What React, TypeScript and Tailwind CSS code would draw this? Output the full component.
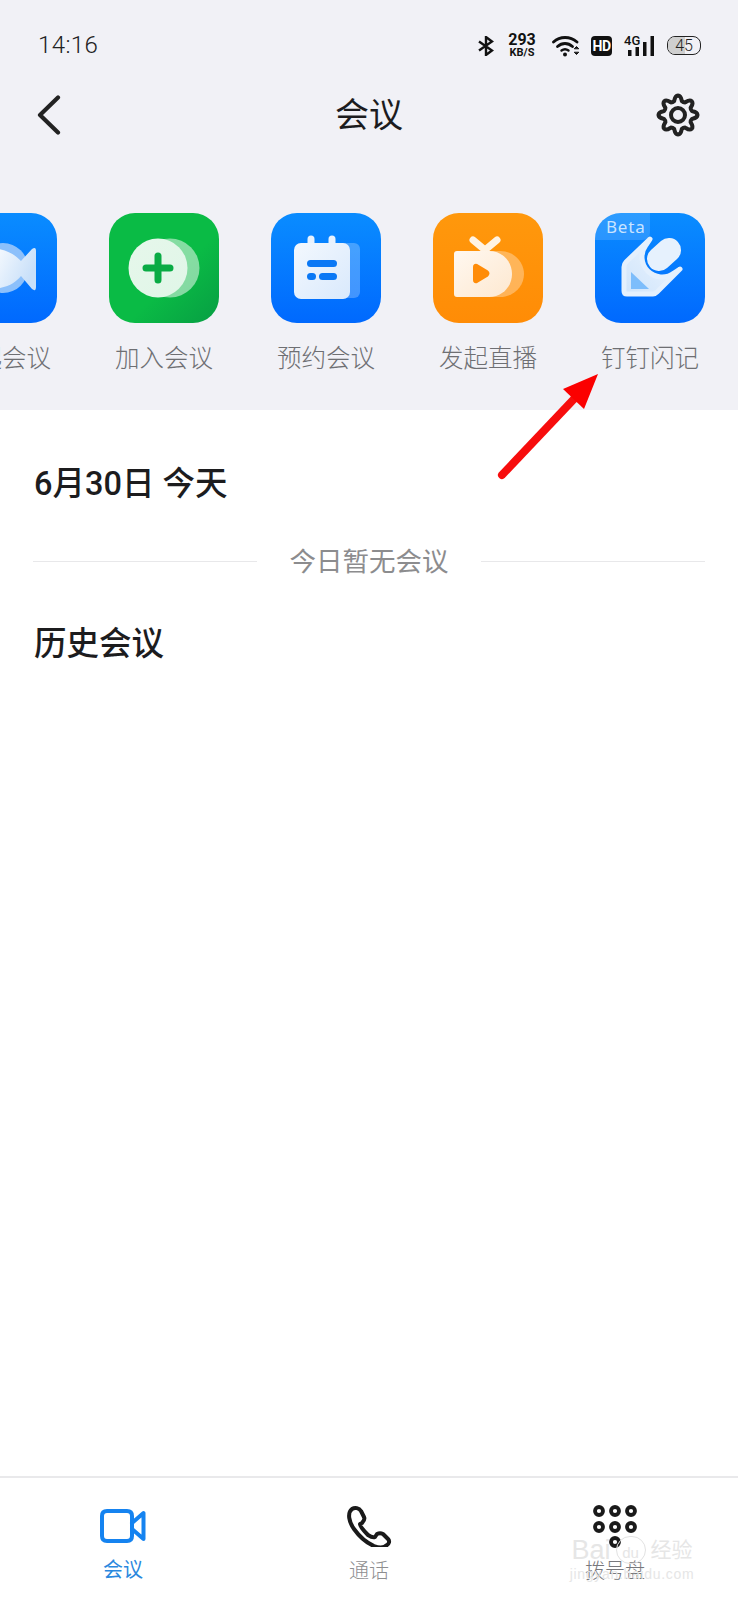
const gearPath = (() => {
  // 8 rounded lobes round the centre
  const pts: string[] = [];
  const n = 8;
  for (let i = 0; i < n; i++) {
    const a = (i / n) * Math.PI * 2 - Math.PI / 2;
    const step = (Math.PI * 2) / n;
    const p = (r: number, t: number) =>
      `${(21 + r * Math.cos(t)).toFixed(2)} ${(21 + r * Math.sin(t)).toFixed(2)}`;
    if (i === 0) pts.push(`M${p(14.5, a - step * 0.34)}`);
    pts.push(`C${p(16.5, a - step * 0.26)} ${p(19.5, a - step * 0.2)} ${p(19.5, a)}`);
    pts.push(`C${p(19.5, a + step * 0.2)} ${p(16.5, a + step * 0.26)} ${p(14.5, a + step * 0.34)}`);
    pts.push(`Q${p(13.6, a + step * 0.5)} ${p(14.5, a + step * 0.66)}`);
  }
  return pts.join(" ") + "Z";
})();

const StatusBar = () => (
  <div className="flex h-[62px] items-end justify-between pl-[38px] pr-[37px]">
    <span className="text-[24px] leading-[34px] font-light tracking-[0.4px] text-[#222]">14:16</span>
    <div className="flex items-center pb-[4px]">
      <svg width="16" height="20" viewBox="0 0 16 20" fill="none" stroke="#111" strokeWidth="2.4">
        <path d="M1 5.5 14 14.5 8 19V1L14 5.5 1 14.5" />
      </svg>
      <div className="ml-[14px] flex w-[28px] flex-col items-center font-['Roboto',sans-serif] text-[#111]">
        <span className="text-[16px] leading-[14px] font-bold">293</span>
        <span className="mt-[1px] text-[11px] leading-[10px] font-bold">KB/S</span>
      </div>
      <svg className="ml-[16px]" width="28" height="22" viewBox="0 0 28 22" fill="none" stroke="#111" strokeWidth="2.8" strokeLinecap="round">
        <path d="M1.5 7C8 1 18 1 25 7" />
        <path d="M5.5 11.5C10 7.5 16 7.5 20.5 11.5" />
        <path d="M9.5 15.5C11.500 14 14.500 14 16.500 15.500" strokeWidth="2.4" />
        <circle cx="13" cy="19.500" r="2" fill="#111" stroke="none" />
        <path d="M22.500 13.500 24.500 11.500 26.500 13.500Z M22.500 17.500 24.500 19.500 26.500 17.500Z" fill="#111" stroke="#111" strokeWidth="1" />
      </svg>
      <div className="ml-[11px] flex h-[20px] w-[21px] items-center justify-center rounded-[4px] bg-[#111] font-['Roboto',sans-serif] text-[14px] leading-none font-bold tracking-[-0.5px] text-white">
        HD
      </div>
      <div className="relative ml-[12px] h-[20px] w-[31px]">
        <span className="absolute top-[-2px] left-0 font-['Roboto',sans-serif] text-[13px] leading-[13px] font-medium text-[#111]">4G</span>
        <svg className="absolute top-0 left-0" width="31" height="20" viewBox="0 0 31 20" fill="#111">
          <rect x="4" y="14" width="3.500" height="6" />
          <rect x="11.500" y="11" width="3.500" height="9" />
          <rect x="19" y="6" width="3.500" height="14" />
          <rect x="26.500" y="0" width="3.500" height="20" />
        </svg>
      </div>
      <div className="relative ml-[12px] flex h-[19px] w-[34px] items-center justify-center overflow-hidden rounded-[8px] border-[1.5px] border-[#222]">
        <div className="absolute inset-y-0 left-0 w-[54%] bg-[#cfcfcf]" />
        <span className="relative font-['Roboto',sans-serif] text-[16px] leading-none font-light text-[#222]">45</span>
      </div>
    </div>
  </div>
);

const VideoApp = () => (
  <svg width="110" height="110" viewBox="0 0 110 110">
    <defs>
      <linearGradient id="v" x1="0" y1="0" x2="0" y2="1">
        <stop offset="0" stopColor="#0a8cff" />
        <stop offset="1" stopColor="#0069fe" />
      </linearGradient>
      <linearGradient id="vw" x1="0" y1="0" x2="1" y2="0.4">
        <stop offset="0" stopColor="#ffffff" />
        <stop offset="1" stopColor="#c9e0f9" />
      </linearGradient>
    </defs>
    <rect width="110" height="110" rx="26" fill="url(#v)" />
    <circle cx="56" cy="55" r="25" fill="#8cc0fb" />
    <path d="M40 35C60 35 68 42 74 48L85 36Q89 33 89 38V74Q89 79 85 76L74 63C68 70 60 76 40 76Z" fill="url(#vw)" />
  </svg>
);

const JoinApp = () => (
  <svg width="110" height="110" viewBox="0 0 110 110">
    <defs>
      <linearGradient id="g" x1="0.3" y1="0.3" x2="1" y2="1">
        <stop offset="0.4" stopColor="#0abb45" />
        <stop offset="1" stopColor="#079e43" />
      </linearGradient>
      <linearGradient id="gw" x1="0" y1="0" x2="1" y2="1">
        <stop offset="0" stopColor="#e6f7eb" />
        <stop offset="1" stopColor="#e0f6e7" />
      </linearGradient>
    </defs>
    <rect width="110" height="110" rx="26" fill="url(#g)" />
    <circle cx="61" cy="55" r="29.500" fill="#ffffff" fillOpacity="0.5" />
    <circle cx="49" cy="55" r="29.500" fill="url(#gw)" />
    <path d="M37 55H61M49 43V67" stroke="#09ab44" strokeWidth="7" strokeLinecap="round" />
  </svg>
);

const ScheduleApp = () => (
  <svg width="110" height="110" viewBox="0 0 110 110">
    <defs>
      <linearGradient id="c" x1="0" y1="0" x2="0" y2="1">
        <stop offset="0" stopColor="#0a8cff" />
        <stop offset="1" stopColor="#0069fe" />
      </linearGradient>
      <linearGradient id="cw" x1="0" y1="0" x2="1" y2="1">
        <stop offset="0" stopColor="#f3f8fe" />
        <stop offset="1" stopColor="#d9e9fc" />
      </linearGradient>
    </defs>
    <rect width="110" height="110" rx="26" fill="url(#c)" />
    <rect x="60" y="30" width="29" height="55" rx="6" fill="#ffffff" fillOpacity="0.25" />
    <path d="M40 34V26M61 34V26" stroke="#e8f2fe" strokeWidth="7" strokeLinecap="round" />
    <rect x="23" y="30" width="56" height="56" rx="7" fill="url(#cw)" />
    <rect x="36" y="47" width="30" height="7" rx="3.500" fill="#0a78f5" />
    <rect x="36" y="60" width="9" height="7" rx="3.500" fill="#0a78f5" />
    <rect x="48" y="60" width="18" height="7" rx="3.500" fill="#0a78f5" />
  </svg>
);

const LiveApp = () => (
  <svg width="110" height="110" viewBox="0 0 110 110">
    <defs>
      <linearGradient id="o" x1="0" y1="0" x2="0" y2="1">
        <stop offset="0" stopColor="#ff980c" />
        <stop offset="1" stopColor="#ff8c06" />
      </linearGradient>
      <linearGradient id="ow" x1="0" y1="0" x2="1" y2="1">
        <stop offset="0" stopColor="#fff8f0" />
        <stop offset="1" stopColor="#fde8d0" />
      </linearGradient>
    </defs>
    <rect width="110" height="110" rx="26" fill="url(#o)" />
    <path d="M40 27 52 37 64 27" fill="none" stroke="#fff3e4" strokeWidth="7" strokeLinecap="round" strokeLinejoin="round" />
    <path d="M40 38H67C81 38 91 49 91 61S81 84 67 84H40Z" fill="#ffffff" fillOpacity="0.32" />
    <path d="M24 38H56C70 38 79 49 79 61S70 84 56 84H24Q21 84 21 81V41Q21 38 24 38Z" fill="url(#ow)" />
    <path d="M41 54Q41 51 44 52L54 58Q57 60 54 63L44 69Q41 70 41 67Z" fill="#ff8c08" stroke="#ff8c08" strokeWidth="2" strokeLinejoin="round" />
  </svg>
);

const NoteApp = () => (
  <svg width="110" height="110" viewBox="0 0 110 110">
    <defs>
      <linearGradient id="n" x1="0" y1="0" x2="0" y2="1">
        <stop offset="0" stopColor="#0a8cff" />
        <stop offset="1" stopColor="#0069fe" />
      </linearGradient>
      <linearGradient id="nw" x1="0" y1="1" x2="1" y2="0">
        <stop offset="0" stopColor="#cfe4fb" />
        <stop offset="1" stopColor="#f0f7fe" />
      </linearGradient>
    </defs>
    <rect width="110" height="110" rx="26" fill="url(#n)" />
    <path d="M0 27V26A26 26 0 0 1 26 0H55V19Q55 27 47 27Z" fill="#ffffff" fillOpacity="0.14" />
    <text x="11" y="20" fontSize="17" letterSpacing="0.8" fill="#ffffff" fillOpacity="0.75" fontFamily="'Noto Sans',sans-serif">Beta</text>
    <path
      d="M55 26 31 49Q29 51 29 54V78Q29 81 32 81H58Q60 81 62 79L85 56 79 60A20 20 0 0 1 51 32Z"
      fill="url(#nw)"
      stroke="#e4f0fd"
      strokeWidth="5"
      strokeLinecap="round"
      strokeLinejoin="round"
    />
    <path d="M74 37 64 46" stroke="#e6f1fd" strokeWidth="24" strokeLinecap="round" />
    <path d="M36 59 54 76H36Z" fill="#7dbdfb" />
  </svg>
);

const apps = [
  { icon: <VideoApp />, label: "发起会议" },
  { icon: <JoinApp />, label: "加入会议" },
  { icon: <ScheduleApp />, label: "预约会议" },
  { icon: <LiveApp />, label: "发起直播" },
  { icon: <NoteApp />, label: "钉钉闪记" },
];

export default function App() {
  return (
    <div className="relative flex h-[1600px] w-[738px] flex-col overflow-hidden bg-white font-['Roboto','Noto_Sans_CJK_SC',sans-serif]">
      <header className="h-[410px] bg-[#f1f1f6]">
        <StatusBar />
        <div className="flex h-[106px] items-center justify-between pl-[36px] pr-[38px]">
          <svg width="26" height="40" viewBox="0 0 26 40" fill="none" stroke="#222" strokeWidth="4.200" strokeLinecap="round" strokeLinejoin="round">
            <path d="M22 2.500 4 20 22 37.500" />
          </svg>
          <h1 className="pl-[20px] text-[34px] leading-none font-normal text-[#1c1c1e]">会议</h1>
          <svg width="44" height="44" viewBox="-1 -1 44 44" fill="none" stroke="#222" strokeWidth="4" strokeLinejoin="round">
            <path d={gearPath} />
            <circle cx="21" cy="21" r="7" />
          </svg>
        </div>
        <div className="ml-[-79px] flex pt-[45px]">
          {apps.map((app) => (
            <div key={app.label} className="flex w-[162px] shrink-0 flex-col items-center">
              <div className="h-[110px] w-[110px]">{app.icon}</div>
              <span className="mt-[19px] text-[24.500px] leading-[34px] font-light text-[#6e6f73]">{app.label}</span>
            </div>
          ))}
        </div>
      </header>

      <main className="flex flex-1 flex-col pr-[33px] pl-[34px]">
        <h2 className="pt-[54px] text-[32.500px] leading-[40px] font-medium text-[#1c1c1e]">6月30日 今天</h2>
        <div className="mt-[39px] -ml-px flex items-center justify-between">
          <div className="mb-[2px] h-px w-[224px] bg-[#e8e8ea]" />
          <span className="text-[26.500px] leading-[38px] text-[#8c8c8e]">今日暂无会议</span>
          <div className="mb-[2px] h-px w-[224px] bg-[#e8e8ea]" />
        </div>
        <h2 className="mt-[43px] text-[32.500px] leading-[40px] font-medium text-[#1c1c1e]">历史会议</h2>
      </main>

      <nav className="flex h-[124px] border-t-2 border-[#e9e9eb]">
        <div className="flex w-[246px] flex-col items-center pt-[31px]">
          <svg width="46" height="34" viewBox="0 0 46 34" fill="none" stroke="#1583f0" strokeWidth="4" strokeLinejoin="round">
            <path d="M7 2H27Q32 2 32 7V27Q32 32 27 32H7Q2 32 2 27V7Q2 2 7 2Z" />
            <path d="M32 14 43.500 4V30L32 20" strokeLinecap="round" />
          </svg>
          <span className="mt-[13px] text-[20px] leading-[28px] text-[#2a88de]">会议</span>
        </div>
        <div className="flex flex-1 flex-col items-center pt-[27px]">
          <svg width="46" height="42" viewBox="12 7 46 42" fill="none" stroke="#1a1a1a" strokeWidth="4" strokeLinejoin="round">
            <path d="M18 11C21 9 25 10 27 13L30 19C31 21 30 23 28 25L26 26C26 28 30 33 34 37C37 39 39 40 41 39L43 36C45 35 47 35 49 36L54 41C56 43 55 46 53 47C50 50 45 50 40 48C33 45 25 38 20 31C15 24 13 15 18 11Z" />
          </svg>
          <span className="mt-[10px] text-[20px] leading-[28px] font-light text-[#8e8e90]">通话</span>
        </div>
        <div className="flex w-[246px] flex-col items-center pt-[27px]">
          <svg width="46" height="44" viewBox="0 0 46 44" fill="none" stroke="#1a1a1a" strokeWidth="3.800">
            {[7, 23, 39].map((x) => (
              <circle key={`a${x}`} cx={x} cy="6" r="4" />
            ))}
            {[7, 23, 39].map((x) => (
              <circle key={`b${x}`} cx={x} cy="22" r="4" />
            ))}
            <circle cx="23" cy="37" r="4" />
          </svg>
          <span className="mt-[8px] text-[20px] leading-[28px] font-light text-[#77787c]">拨号盘</span>
        </div>
      </nav>

      <div className="absolute top-[1536px] left-[566px] flex w-[132px] flex-col items-center text-[#e6e6e6]">
        <div className="flex items-center gap-[5px]">
          <span className="font-['Liberation_Sans',sans-serif] text-[27px] leading-[28px]">Bai</span>
          <div className="relative flex h-[28px] w-[30px] items-end justify-center rounded-[14px] border border-[#e2e2e2]">
            <span className="font-['Liberation_Sans',sans-serif] text-[15px] leading-[20px]">du</span>
          </div>
          <span className="text-[21px] leading-[28px]">经验</span>
        </div>
        <span className="mt-[2px] font-['Liberation_Sans',sans-serif] text-[14px] leading-[16px] tracking-[0.7px]">jingyan.baidu.com</span>
      </div>

      <svg className="absolute top-[370px] left-[495px]" width="110" height="112" viewBox="495 370 110 112">
        <path d="M502 475 574 399" stroke="#f70d0d" strokeWidth="8" strokeLinecap="round" />
        <path d="M598 374 563 389 584 409Z" fill="#fb0000" />
      </svg>
    </div>
  );
}
